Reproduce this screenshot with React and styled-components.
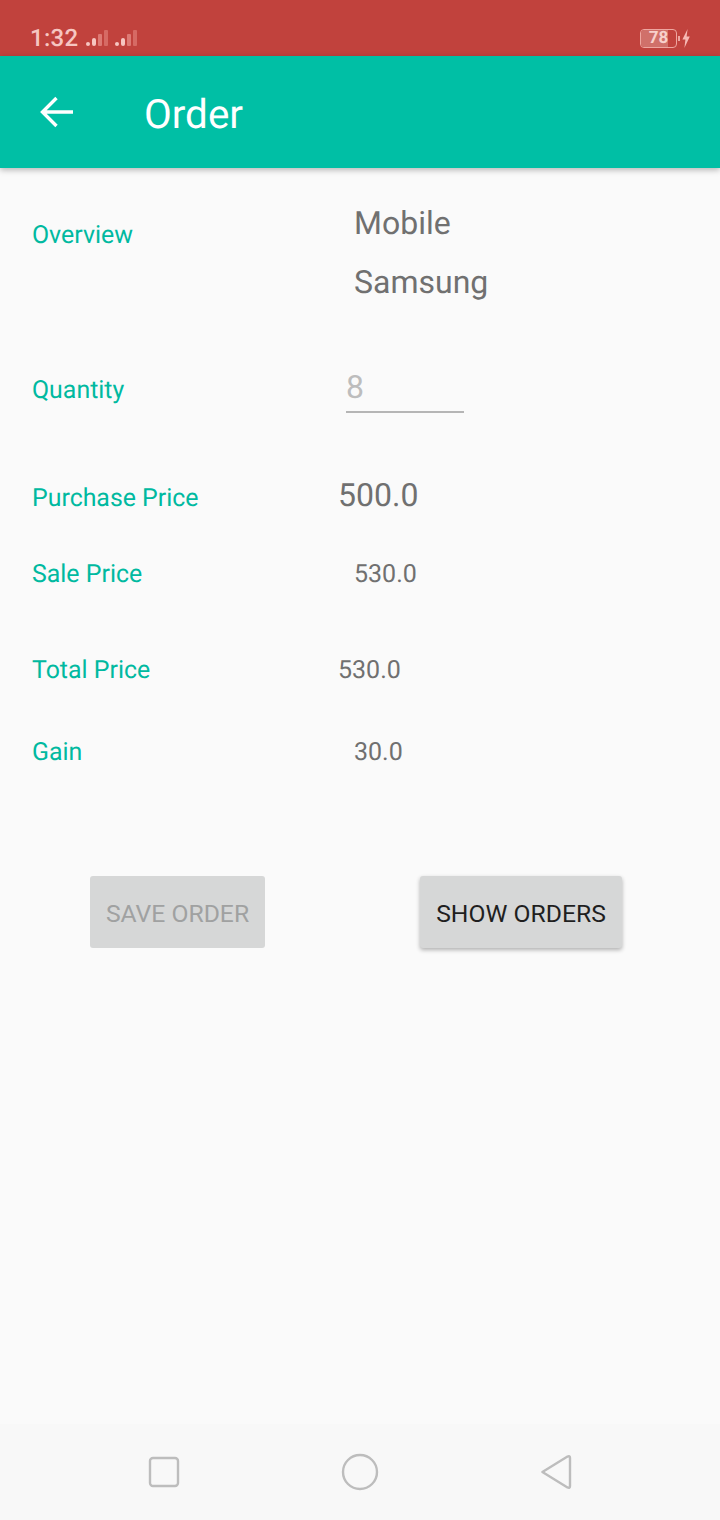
import styled, { createGlobalStyle } from 'styled-components'

const GlobalStyle = createGlobalStyle`
  html, body {
    margin: 0;
    padding: 0;
    background: #fafafa;
  }
  body {
    font-family: Roboto, "Liberation Sans", sans-serif;
    text-rendering: geometricPrecision;
  }
`

const rows = [
  { label: 'Purchase Price', value: '500.0', height: 76, size: 32, indent: 338, gap: 20, shift: -4 },
  { label: 'Sale Price', value: '530.0', height: 76, size: 25, indent: 354, gap: 0, shift: 2 },
  { label: 'Total Price', value: '530.0', height: 82, size: 25, indent: 338, gap: 17, shift: 2 },
  { label: 'Gain', value: '30.0', height: 82, size: 25, indent: 354, gap: 0, shift: 2 },
]

export default function App() {
  return (
    <Screen>
      <GlobalStyle />
      <StatusBar>
        <StatusLeft>
          <Clock>1:32</Clock>
          <Signal />
          <Signal />
        </StatusLeft>
        <StatusRight>
          <Battery>
            <BatteryLevel />
            <BatteryText>78</BatteryText>
          </Battery>
          <BatteryTip />
          <svg width="8" height="19" viewBox="0 0 8 19">
            <path d="M5.6 0 L0.4 10.6 H3.4 L2.4 19 L7.8 7.4 H4.6 Z" fill="#f6b9b4" />
          </svg>
        </StatusRight>
      </StatusBar>

      <AppBar>
        <svg width="34" height="32" viewBox="0 0 34 32" fill="none">
          <path d="M33 16 H2.5 M16.5 2 L2.5 16 L16.5 30" stroke="#fff" strokeWidth="3.4" />
        </svg>
        <Title>Order</Title>
      </AppBar>

      <Content>
        <OverviewRow>
          <Label>Overview</Label>
          <OverviewValues>
            <BigValue>Mobile</BigValue>
            <BigValue>Samsung</BigValue>
          </OverviewValues>
        </OverviewRow>

        <QuantityRow>
          <Label>Quantity</Label>
          <QuantityField>8</QuantityField>
        </QuantityRow>

        {rows.map((r) => (
          <Row key={r.label} $height={r.height} $gap={r.gap}>
            <Label>{r.label}</Label>
            <Value $size={r.size} $indent={r.indent} $shift={r.shift}>{r.value}</Value>
          </Row>
        ))}

        <Buttons>
          <SaveButton disabled>SAVE ORDER</SaveButton>
          <ShowButton>SHOW ORDERS</ShowButton>
        </Buttons>
      </Content>

      <NavBar>
        <svg width="32" height="32" viewBox="0 0 32 32" fill="none">
          <rect x="2" y="2" width="28" height="28" rx="3" stroke="#bdbdbd" strokeWidth="2.4" />
        </svg>
        <svg width="38" height="38" viewBox="0 0 38 38" fill="none">
          <circle cx="19" cy="19" r="17" stroke="#bdbdbd" strokeWidth="2.4" />
        </svg>
        <svg width="32" height="36" viewBox="0 0 32 36" fill="none">
          <path d="M2.4 18 L27.5 2.6 Q30 1.4 30 4 V32 Q30 34.6 27.5 33.4 Z" stroke="#bdbdbd" strokeWidth="2.4" strokeLinejoin="round" />
        </svg>
      </NavBar>
    </Screen>
  )
}

// two small dots and three bars, the last ones faded
function Signal() {
  return (
    <svg width="24" height="18" viewBox="0 0 24 18">
      <rect x="0" y="13" width="4" height="4" rx="2" fill="#f6c6c1" />
      <rect x="6" y="9" width="4" height="8" rx="2" fill="#f6c6c1" />
      <rect x="12" y="5" width="4" height="12" rx="1" fill="#dd7a74" />
      <rect x="18" y="1" width="4" height="16" rx="1" fill="#d66a64" />
    </svg>
  )
}

const Screen = styled.div`
  width: 720px;
  height: 1520px;
  display: flex;
  flex-direction: column;
  background: #fafafa;
  overflow: hidden;
`

const StatusBar = styled.div`
  height: 56px;
  flex: none;
  background: #c1423d;
  display: flex;
  justify-content: space-between;
  align-items: flex-end;
  padding: 0 30px 4px 30px;
  box-sizing: border-box;
`

const StatusLeft = styled.div`
  display: flex;
  align-items: center;
  gap: 5px;
  height: 28px;
`

const Clock = styled.span`
  color: #f6c6c1;
  font-size: 24px;
  font-weight: 500;
  letter-spacing: 0.3px;
  margin: 0 3px 0 0;
`

const StatusRight = styled.div`
  display: flex;
  align-items: center;
  height: 28px;
`

const Battery = styled.div`
  position: relative;
  width: 37px;
  height: 19px;
  box-sizing: border-box;
  border: 1.5px solid #eea6a0;
  border-radius: 4px;
  overflow: hidden;
`

const BatteryLevel = styled.div`
  width: 78%;
  height: 100%;
  background: #d0706a;
`

const BatteryText = styled.span`
  position: absolute;
  inset: 0;
  display: flex;
  align-items: center;
  justify-content: center;
  color: #f8d0cc;
  font-size: 17px;
  font-weight: 700;
`

const BatteryTip = styled.div`
  width: 2px;
  height: 5px;
  margin: 0 2px 0 1px;
  background: #eea6a0;
`

const AppBar = styled.div`
  height: 112px;
  flex: none;
  background: #00bfa5;
  display: flex;
  align-items: center;
  padding-left: 40px;
  box-sizing: border-box;
  box-shadow: 0 2px 6px rgba(0, 0, 0, 0.28);
  position: relative;
`

const Title = styled.h1`
  margin: 4px 0 0 70px;
  color: #fff;
  font-size: 40.4px;
  font-weight: 400;
`

const Content = styled.div`
  flex: 1;
  padding-left: 32px;
`

const Label = styled.span`
  color: #00b9a0;
  font-size: 24.9px;
  width: 306px;
  flex: none;
  padding-top: 2px;
`

const OverviewRow = styled.div`
  height: 171px;
  display: flex;
  align-items: flex-start;
  padding-top: 51px;
  box-sizing: border-box;
`

const OverviewValues = styled.div`
  display: flex;
  flex-direction: column;
  gap: 22px;
  padding-left: 16px;
  margin-top: -14px;
`

const BigValue = styled.span`
  color: #707070;
  font-size: 32px;
  line-height: 37px;
`

const QuantityRow = styled.div`
  height: 100px;
  display: flex;
  align-items: center;
`

const QuantityField = styled.div`
  width: 118px;
  margin-left: 8px;
  padding: 2px 0 4px 0;
  box-sizing: border-box;
  border-bottom: 2px solid #b5b5b5;
  color: #bdbdbd;
  font-size: 32px;
  line-height: 40px;
`

const Row = styled.div`
  height: ${(p) => p.$height}px;
  margin-top: ${(p) => p.$gap}px;
  display: flex;
  align-items: center;
`

const Value = styled.span`
  color: #707070;
  font-size: ${(p) => p.$size}px;
  margin-left: ${(p) => p.$indent - 338}px;
  margin-top: ${(p) => p.$shift}px;
`

const Buttons = styled.div`
  display: flex;
  margin-top: 84px;
  padding-left: 58px;
  gap: 155px;
`

const SaveButton = styled.button`
  width: 175px;
  height: 72px;
  padding: 2px 0 0;
  border: none;
  border-radius: 3px;
  background: #d6d7d7;
  color: #a0a1a1;
  font-family: inherit;
  font-size: 24.7px;
`

const ShowButton = styled(SaveButton)`
  width: 202px;
  color: #1f1f1f;
  box-shadow: 0 2px 4px rgba(0, 0, 0, 0.3);
`

const NavBar = styled.div`
  height: 96px;
  flex: none;
  background: #f8f8f8;
  display: flex;
  align-items: center;
  justify-content: space-between;
  padding: 0 148px 0 148px;
  box-sizing: border-box;
`
